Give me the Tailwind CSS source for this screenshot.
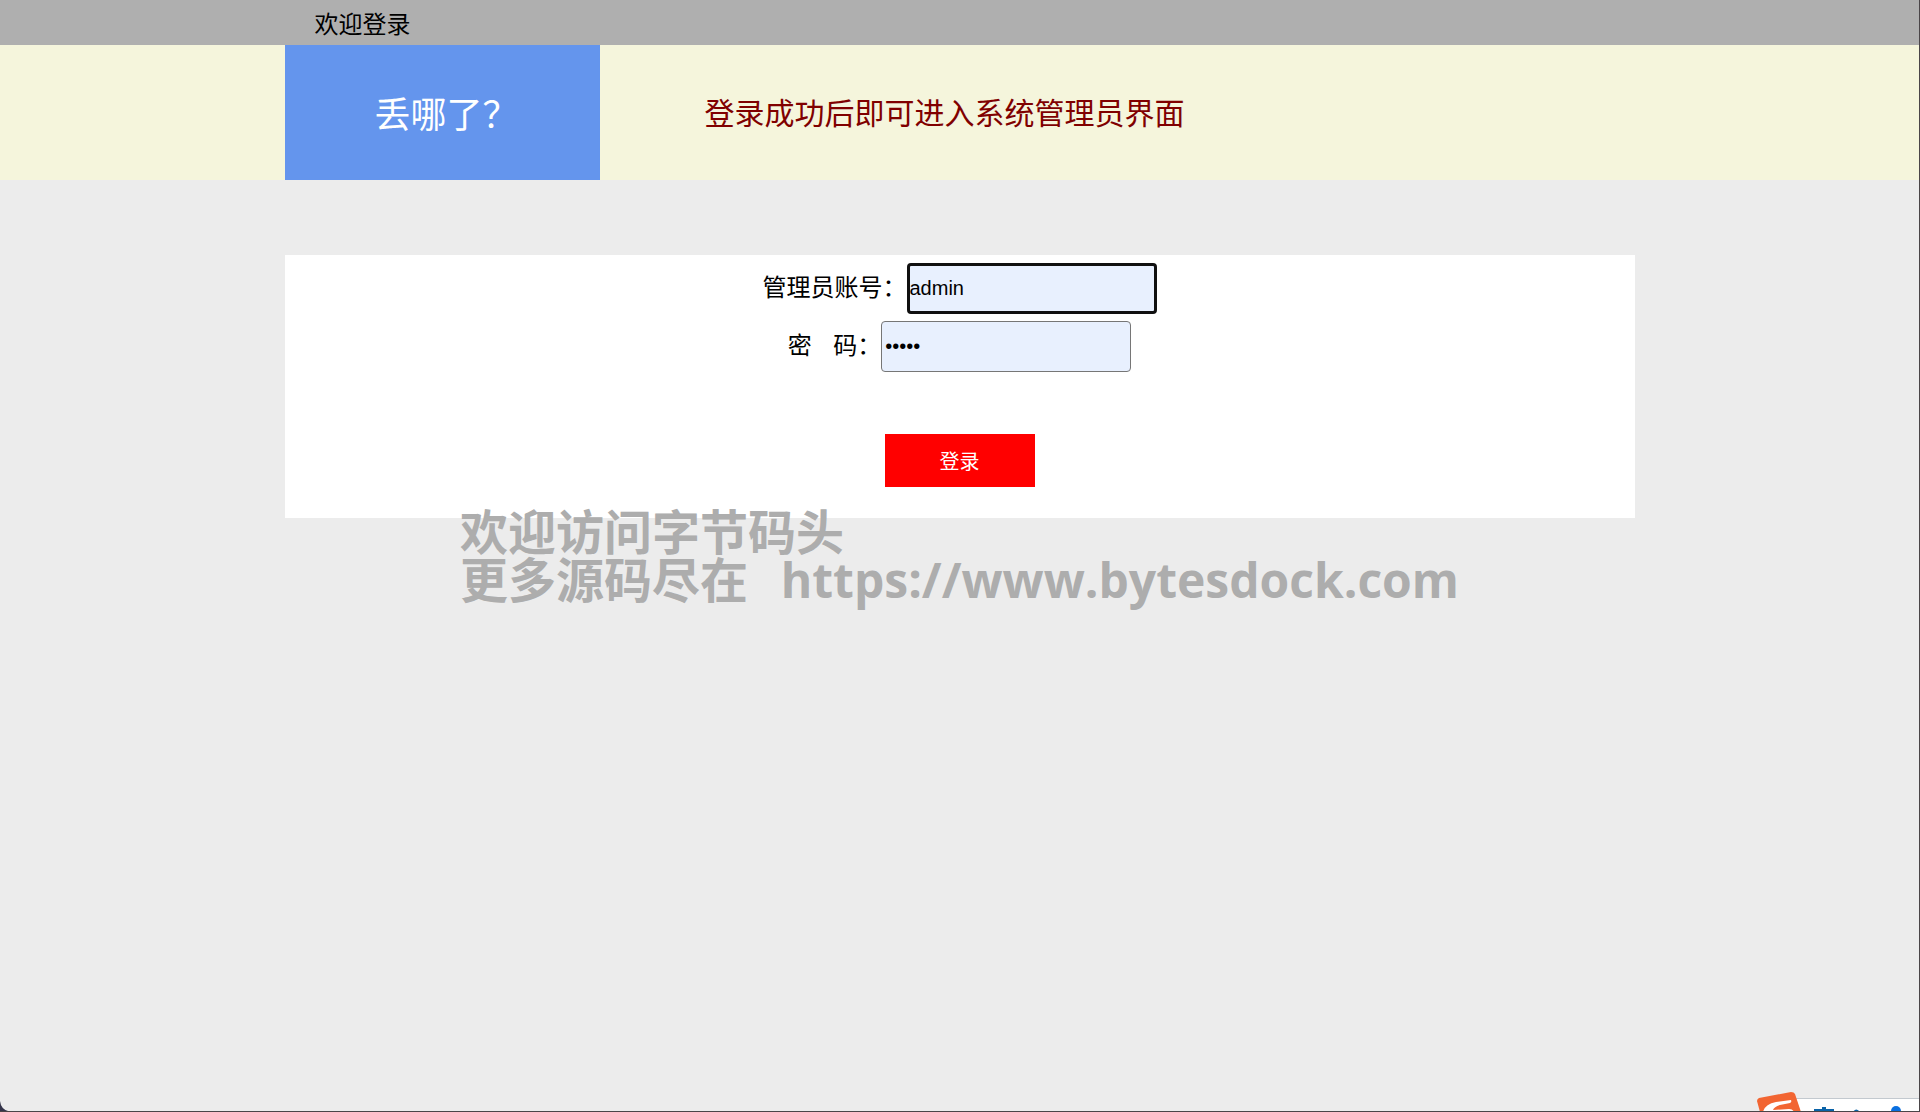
<!DOCTYPE html>
<html lang="zh-CN">
<head>
  <meta charset="UTF-8">
  <title>欢迎登录</title>
  <script src="https://cdn.jsdelivr.net/npm/@tailwindcss/browser@4"></script>
</head>
<body class="relative min-h-screen overflow-hidden bg-[#ececec] text-black font-['Noto_Sans_CJK_SC',sans-serif] border-r border-b border-[#4a4548]">
  <div class="bg-[#afafaf]">
    <div class="max-w-[1350px] mx-auto px-[30px] text-2xl leading-[45px]">欢迎登录</div>
  </div>

  <header class="bg-[#f5f5dc]">
    <div class="max-w-[1350px] mx-auto flex items-center">
      <h1 class="w-[315px] bg-[#6495ed] text-white text-4xl leading-[135px] pl-[90px]">丢哪了？</h1>
      <p class="pl-[105px] pb-[4px] text-3xl text-[#800000]">登录成功后即可进入系统管理员界面</p>
    </div>
  </header>

  <main class="max-w-[1350px] mx-auto mt-[75px]">
    <form id="loginForm" class="bg-white pt-2 pb-[31px] flex flex-col items-center">
      <div class="flex items-center text-2xl">
        <label for="account" class="pb-[6px]">管理员账号：</label>
        <input type="text" id="account" name="account" value="admin" autocomplete="off" class="w-[250px] h-[51px] bg-[#e8f0fe] border-3 border-[#101010] rounded-[4px] text-xl font-['Liberation_Sans',sans-serif] outline-none" />
      </div>
      <div class="flex items-center text-2xl mt-[7px]">
        <label for="password" class="pb-[6px]">密&nbsp;&nbsp;&nbsp;&nbsp;码：</label>
        <input type="password" id="password" name="password" value="admin" class="w-[250px] h-[51px] px-[3px] bg-[#e8f0fe] border border-[#767676] rounded-[4px] text-xl font-['Liberation_Sans',sans-serif] outline-none" />
      </div>
      <button type="submit" class="mt-[62px] w-[150px] h-[53px] bg-[#ff0000] text-white text-xl">登录</button>
    </form>
  </main>

  <!-- watermark -->
  <div class="absolute top-[505px] left-[460px] text-5xl leading-[48px] font-bold text-[#adadad] whitespace-nowrap pointer-events-none">
    <p>欢迎访问字节码头</p>
    <p>更多源码尽在&nbsp;&nbsp;&nbsp;<a href="https://www.bytesdock.com" class="font-['Open_Sans',sans-serif]">https://www.bytesdock.com</a></p>
  </div>

  <!-- window corner -->
  <svg class="absolute left-0 bottom-0 w-[8px] h-[10px]" viewBox="0 0 8 10"><path d="M0 0Q1 8 8 10H0Z" fill="#34344a" /></svg>

  <!-- input method bar -->
  <svg class="absolute right-[-1px] bottom-[-1px] w-[164px] h-[20px]" viewBox="0 0 164 20">
    <path d="M36 6H164V20H36Z" fill="#fff" />
    <path d="M36 6.500H164" stroke="#c3c9cf" />
    <path d="M3 6Q1 7 1 9L4 20H45L39 2Q38 0 35 0Z" fill="#f26532" />
    <path d="M7 20Q9 12 20 10L35 8Q36 10 34 11L24 13Q18 15 17 18L33 17Q37 17 38 20Z" fill="#fff" />
    <path d="M58 20V17H66V15H70V17H78V20Z" fill="#0a63a8" />
    <path d="M97 20Q100 15 104 20Z" fill="#0a63a8" />
    <circle cx="140" cy="19" r="5" fill="#0a6fe0" />
  </svg>

  <script>
    document.getElementById("loginForm").addEventListener("submit", (e) => {
      e.preventDefault();
    });
  </script>
</body>
</html>
